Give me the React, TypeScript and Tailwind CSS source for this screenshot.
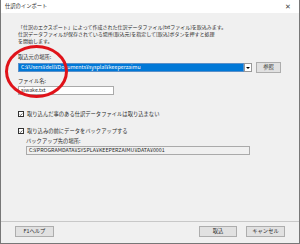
import React from 'react'

const font = "font-['Noto_Sans_CJK_JP','Noto_Sans',sans-serif]"

function Check({ label }: { label: string }) {
    return (
        <div className="flex items-center gap-[3px] h-[8px]">
            <div className="w-[6px] h-[6px] border border-[#333] bg-white flex items-center justify-center">
                <svg viewBox="0 0 6 6" className="w-[5px] h-[5px]">
                    <path d="M1 3 L2.4 4.4 L5 1.5" fill="none" stroke="#000" strokeWidth="0.9" />
                </svg>
            </div>
            <span>{label}</span>
        </div>
    )
}

function Btn({ label, w }: { label: string; w: string }) {
    return (
        <div
            className={`${w} h-[11px] bg-[#e1e1e1] border border-[#adadad] flex items-center justify-center`}
        >
            {label}
        </div>
    )
}

export default function App() {
    return (
        <div
            className={`relative w-[300px] h-[244px] bg-[#f0f0f0] border-x border-b border-[#777] flex flex-col text-[5.3px] leading-[7px] text-[#2a2a2a] ${font}`}
        >
            <div className="h-[13px] bg-white flex items-center justify-between pl-[4px] pr-[8px]">
                <span>仕訳のインポート</span>
                <span className="text-[7px] text-[#444]">✕</span>
            </div>

            <div className="flex-1 flex flex-col pl-[17px] pr-[10px]">
                <div className="mt-[10px] flex flex-col text-[5px]">
                    <span className="h-[7px]">「仕訳のエクスポート」によって作成された仕訳データファイル(txtファイル)を取込みます。</span>
                    <span className="h-[7px]">仕訳データファイルが保存されている場所(取込元)を指定して[取込]ボタンを押すと処理</span>
                    <span className="h-[7px]">を開始します。</span>
                </div>

                <span className="mt-[10px]">取込元の場所:</span>
                <div className="mt-[1px] flex items-center">
                    <div className="w-[226px] h-[9px] bg-[#0078d7] border border-[#5a8fc8] text-white flex items-center pl-[2px]">
                        C:¥Users¥dell¥Documents¥sysplal¥keeperzaimu
                    </div>
                    <div className="w-[8px] h-[9px] bg-white border border-[#999] flex items-center justify-center">
                        <div className="w-0 h-0 border-x-[2px] border-x-transparent border-t-[2px] border-t-black" />
                    </div>
                    <div className="ml-[4px]">
                        <Btn label="参照" w="w-[25px]" />
                    </div>
                </div>

                <span className="mt-[5px]">ファイル名:</span>
                <div className="mt-[1px] w-[96px] h-[9px] bg-white border border-[#aaa] flex items-center pl-[2px]">
                    siwake.txt
                </div>

                <div className="mt-[15px]">
                    <Check label="取り込んだ事のある仕訳データファイルは取り込まない" />
                </div>
                <div className="mt-[9px]">
                    <Check label="取り込みの前にデータをバックアップする" />
                </div>
                <div className="pl-[8px] flex flex-col">
                    <span className="mt-[3px]">バックアップ先の場所:</span>
                    <div className="mt-[1px] w-[224px] h-[9px] bg-[#f0f0f0] border border-[#aaa] flex items-center pl-[2px]">
                        C:¥PROGRAMDATA¥SYSPLA¥KEEPERZAIMU¥DATA¥0001
                    </div>
                </div>
            </div>

            <div className="border-t border-[#c8c8c8] h-[22px] flex items-center px-[14px] pb-[2px]">
                <Btn label="F1ヘルプ" w="w-[39px]" />
                <div className="flex-1" />
                <Btn label="取込" w="w-[38px]" />
                <div className="w-[9px]" />
                <Btn label="キャンセル" w="w-[39px]" />
            </div>

            <div className="absolute left-[4px] top-[45px] w-[63px] h-[53px] rounded-[50%] border-[3px] border-[#e0131a]" />
        </div>
    )
}
